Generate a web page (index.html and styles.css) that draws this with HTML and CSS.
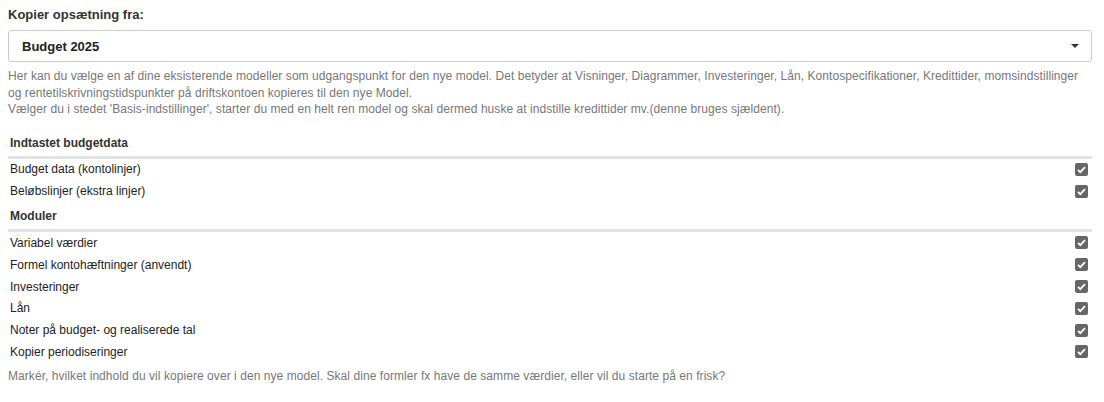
FILE: index.html
```html
<!DOCTYPE html>
<html lang="da">
<head>
    <meta charset="UTF-8">
    <title>Kopier opsætning</title>
    <link rel="stylesheet" href="styles.css">
</head>
<body>
    <div class="form">
        <label class="field-label">Kopier opsætning fra:</label>
        <div class="select">
            <span>Budget 2025</span>
            <span class="caret"></span>
        </div>
        <p class="help">
            Her kan du vælge en af dine eksisterende modeller som udgangspunkt for den nye model. Det betyder at Visninger, Diagrammer, Investeringer, Lån, Kontospecifikationer, Kredittider, momsindstillinger og rentetilskrivningstidspunkter på driftskontoen kopieres til den nye Model.<br>
            Vælger du i stedet 'Basis-indstillinger', starter du med en helt ren model og skal dermed huske at indstille kredittider mv.(denne bruges sjældent).
        </p>

        <div class="group">
            <div class="group-title">Indtastet budgetdata</div>
            <div class="row"><span>Budget data (kontolinjer)</span><span class="check"></span></div>
            <div class="row"><span>Beløbslinjer (ekstra linjer)</span><span class="check"></span></div>
        </div>

        <div class="group">
            <div class="group-title">Moduler</div>
            <div class="row"><span>Variabel værdier</span><span class="check"></span></div>
            <div class="row"><span>Formel kontohæftninger (anvendt)</span><span class="check"></span></div>
            <div class="row"><span>Investeringer</span><span class="check"></span></div>
            <div class="row"><span>Lån</span><span class="check"></span></div>
            <div class="row"><span>Noter på budget- og realiserede tal</span><span class="check"></span></div>
            <div class="row"><span>Kopier periodiseringer</span><span class="check"></span></div>
        </div>

        <p class="help help-bottom">Markér, hvilket indhold du vil kopiere over i den nye model. Skal dine formler fx have de samme værdier, eller vil du starte på en frisk?</p>
    </div>
</body>
</html>
```

FILE: styles.css
```css
body {
    margin: 0;
    font-family: "Liberation Sans", Arial, sans-serif;
    font-size: 12px;
    color: #333;
    background: #fff;
}
.form {
    padding: 6px 12px 0 8px;
}
.field-label {
    display: block;
    font-weight: bold;
    font-size: 13px;
    line-height: 18px;
    margin-bottom: 6px;
}
.select {
    display: flex;
    align-items: center;
    justify-content: space-between;
    height: 30px;
    border: 1px solid #ccc;
    border-radius: 3px;
    padding: 0 12px 0 13px;
    font-weight: bold;
    font-size: 13px;
    color: #222;
}
.caret {
    width: 0;
    height: 0;
    border-left: 4px solid transparent;
    border-right: 4px solid transparent;
    border-top: 4px solid #333;
}
.help {
    color: #777;
    line-height: 16.5px;
    letter-spacing: 0.06px;
    margin: 6px 0 13px;
}
.help-bottom {
    margin-top: 5px;
}
.group + .group {
    margin-top: 2px;
}
.group-title {
    font-weight: bold;
    line-height: 18px;
    padding: 3px 2px 4px;
    border-bottom: 3px solid #e3e3e3;
}
.row {
    display: flex;
    justify-content: space-between;
    align-items: center;
    height: 21.8px;
    padding: 0 4px 0 2px;
    color: #222;
}
.check {
    width: 13px;
    height: 13px;
    border-radius: 2px;
    background: #666 url("data:image/svg+xml,%3Csvg xmlns='http://www.w3.org/2000/svg' viewBox='0 0 13 13'%3E%3Cpath d='M3 6.8l2.3 2.3L10 4.2' fill='none' stroke='white' stroke-width='1.8'/%3E%3C/svg%3E") center/13px 13px no-repeat;
}
```
